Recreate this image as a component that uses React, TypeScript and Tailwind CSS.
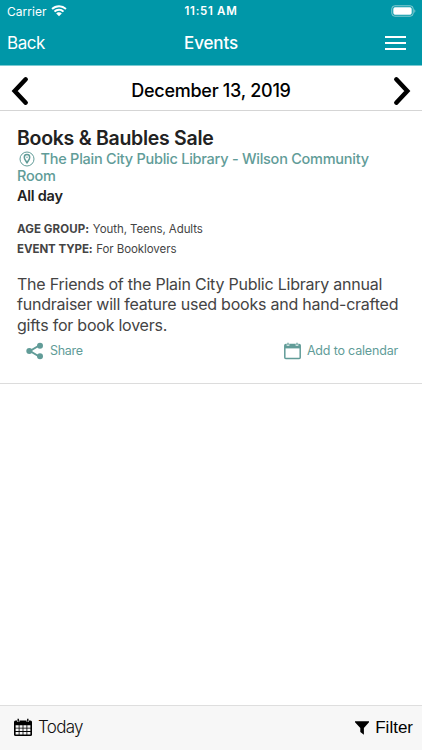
import React from "react";

function Chevron({ flip = false }: { flip?: boolean }) {
  return (
    <svg width="18" height="30" viewBox="0 0 18 30" fill="none" stroke="#000" strokeWidth="4.500" strokeLinecap="round" className={flip ? "-scale-x-100" : ""}>
      <path d="M14.700 3.300 L3.700 15 L14.700 26.700" />
    </svg>
  );
}

function StatusBar() {
  return (
    <div className="grid h-[22px] grid-cols-[1fr_auto_1fr] items-center pt-px text-[12px]">
      <div className="flex items-center pl-[7px]">
        <span className="tracking-[0.05px]">Carrier</span>
        <svg width="16" height="12" viewBox="0 0 16 12" className="mb-px ml-[4px]" fill="#fff">
          <path d="M8 .3C5.1.3 2.4 1.4.4 3.300l1.300 1.400A9.200 9.200 0 0 1 8 2.200c2.400 0 4.600.9 6.300 2.500l1.300-1.400A11 11 0 0 0 8 .3Z" />
          <path d="M8 3.800c-2 0-3.800.8-5.200 2.100l1.400 1.400A5.500 5.500 0 0 1 8 5.700c1.500 0 2.800.6 3.800 1.600l1.400-1.400A7.500 7.500 0 0 0 8 3.800Z" />
          <path d="M8 7.200c-1.100 0-2.100.5-2.800 1.200L8 11.300l2.800-2.900A4 4 0 0 0 8 7.200Z" />
        </svg>
      </div>
      <span className="text-[11.5px] font-semibold tracking-[0.7px]">11:51 AM</span>
      <div className="flex justify-end pb-[2px] pr-[6px]">
        <svg width="25" height="12" viewBox="0 0 25 12" fill="none">
          <rect x=".8" y=".8" width="21.400" height="10.400" rx="3" stroke="#8bcdd3" />
          <rect x="2.300" y="2.300" width="18.400" height="7.400" rx="1.600" fill="#fff" />
          <path d="M23.400 4.200c1.200.5 1.200 3.100 0 3.600Z" fill="#8bcdd3" />
        </svg>
      </div>
    </div>
  );
}

export default function App() {
  return (
    <div className="flex h-[750px] w-[422px] flex-col overflow-hidden whitespace-nowrap bg-white font-['Inter',sans-serif]">
      <header className="h-[66px] shrink-0 border-b border-[#7bcad2] bg-[#0097a8] text-white">
        <StatusBar />
        <div className="grid h-[43px] grid-cols-[1fr_auto_1fr] items-center">
          <span className="pl-[7px] text-[17px] tracking-[-0.45px]">Back</span>
          <span className="text-[17px] font-medium tracking-[-0.15px]">Events</span>
          <div className="flex justify-end pb-[2px] pr-[16px]">
            <div className="flex w-[21px] flex-col gap-[4px]">
              <i className="h-[2px] bg-white" />
              <i className="h-[2px] bg-white" />
              <i className="h-[2px] bg-white" />
            </div>
          </div>
        </div>
      </header>
      <nav className="flex h-[45px] shrink-0 items-center justify-between border-b border-[#d5d5d5] px-[11px] pt-[5px]">
        <Chevron />
        <span className="text-[18px] font-medium tracking-[-0.27px] text-black">December 13, 2019</span>
        <Chevron flip />
      </nav>
      <article className="h-[273px] shrink-0 border-b border-[#dcdcdc] px-[17px] pt-[15px]">
        <h1 className="text-[19.500px] font-semibold leading-[25px] tracking-[-0.28px] text-[#222]">Books &amp; Baubles Sale</h1>
        <div className="text-[14.500px] font-medium leading-[16px] tracking-[-0.25px] text-[#619c98]">
          <div className="flex items-center">
            <svg width="16" height="16" viewBox="0 0 16 16" className="ml-[1.500px] mr-[6px]" fill="none" stroke="#619c98">
              <circle cx="8" cy="8" r="7" />
              <path d="M8 12.300C7.500 10 5.300 9 5.300 6.200a2.700 2.700 0 0 1 5.400 0C10.700 9 8.500 10 8 12.300Z" strokeWidth="1.500" />
              <circle cx="8" cy="6.200" r=".7" fill="#619c98" stroke="none" />
            </svg>
            <span>The Plain City Public Library - Wilson Community</span>
          </div>
          <div className="pt-px">Room</div>
        </div>
        <div className="mt-[2px] text-[14.500px] font-semibold leading-[20px] tracking-[-0.25px] text-[#222]">All day</div>
        <div className="mt-[13px] text-[11.500px] leading-[20px] tracking-[-0.08px] text-[#444]">
          <div><b className="font-bold tracking-[0.1px]">AGE GROUP:</b> <span className="ml-[0.500px]">Youth, Teens, Adults</span></div>
          <div><b className="font-bold tracking-[-0.05px]">EVENT TYPE:</b> <span className="ml-[0.500px]">For Booklovers</span></div>
        </div>
        <div className="mt-[14.500px] text-[16px] leading-[20.500px] tracking-[-0.23px] text-[#444]">
          <div><span>The Friends of the Plain City Public Library annual</span></div>
          <div><span>fundraiser will feature used books and hand-crafted</span></div>
          <div><span>gifts for book lovers.</span></div>
        </div>
        <div className="mt-[6px] flex items-center justify-between pl-[9px] pr-[7px] text-[12.500px] leading-[20px] tracking-[-0.18px] text-[#619c98]">
          <div className="flex items-center gap-[6px]">
            <svg width="18" height="18" viewBox="0 0 18 18" fill="#619c98" className="mb-px">
              <path d="M14 3 4 9l10 6" fill="none" stroke="#619c98" strokeWidth="2" />
              <circle cx="14" cy="3.800" r="3" /><circle cx="3.300" cy="9" r="3" /><circle cx="14" cy="14.200" r="3" />
            </svg>
            <span className="tracking-[-0.3px]">Share</span>
          </div>
          <div className="flex items-center gap-[6px]">
            <svg width="17" height="18" viewBox="0 0 17 18" fill="none" stroke="#619c98" className="mb-px">
              <rect x=".8" y="2.500" width="15.400" height="14" rx="1" strokeWidth="1.500" />
              <path d="M1 4.400h15" strokeWidth="4" />
              <path d="M4 1v3M13 1v3" stroke="#fff" strokeWidth="2.500" />
              <path d="M4 .8v2.700M13 .8v2.700" strokeWidth="1.300" />
            </svg>
            <span>Add to calendar</span>
          </div>
        </div>
      </article>
      <main className="flex-1" />
      <footer className="flex h-[45px] shrink-0 items-center justify-between border-t border-[#dedede] bg-[#f7f7f7] pl-[14px] pr-[9px] text-[17px] text-[#111]">
        <div className="flex items-center gap-[6px]">
          <svg width="18" height="19" viewBox="0 0 18 19" className="mb-px">
            <rect x="0" y="2.500" width="18" height="15.500" rx="1.500" fill="#000" />
            <path d="M1.600 7.300h3.100v2.500H1.600zm3.900 0h3.100v2.500H5.500zm3.900 0h3.100v2.500H9.400zm3.900 0h3.100v2.500h-3.100zM1.600 10.600h3.100v2.500H1.600zm3.900 0h3.100v2.500H5.500zm3.900 0h3.100v2.500H9.400zm3.900 0h3.100v2.500h-3.100zM1.600 13.900h3.100v2.500H1.600zm3.900 0h3.100v2.500H5.500zm3.900 0h3.100v2.500H9.400zm3.900 0h3.100v2.500h-3.100z" fill="#f7f7f7" />
            <path d="M4.200 1v3M13.800 1v3" stroke="#f7f7f7" strokeWidth="2.400" />
            <path d="M4.200.8v3M13.800.8v3" stroke="#000" strokeWidth="1.400" />
          </svg>
          <span className="font-light tracking-[-0.7px]">Today</span>
        </div>
        <div className="flex items-center gap-[6px] text-black">
          <svg width="14" height="14" viewBox="0 0 14 14"><path d="M0 .3h14v1L8.900 7v6.700L5.300 11V7L0 1.300Z" /></svg>
          <span className="font-['Liberation_Sans',sans-serif]">Filter</span>
        </div>
      </footer>
    </div>
  );
}
